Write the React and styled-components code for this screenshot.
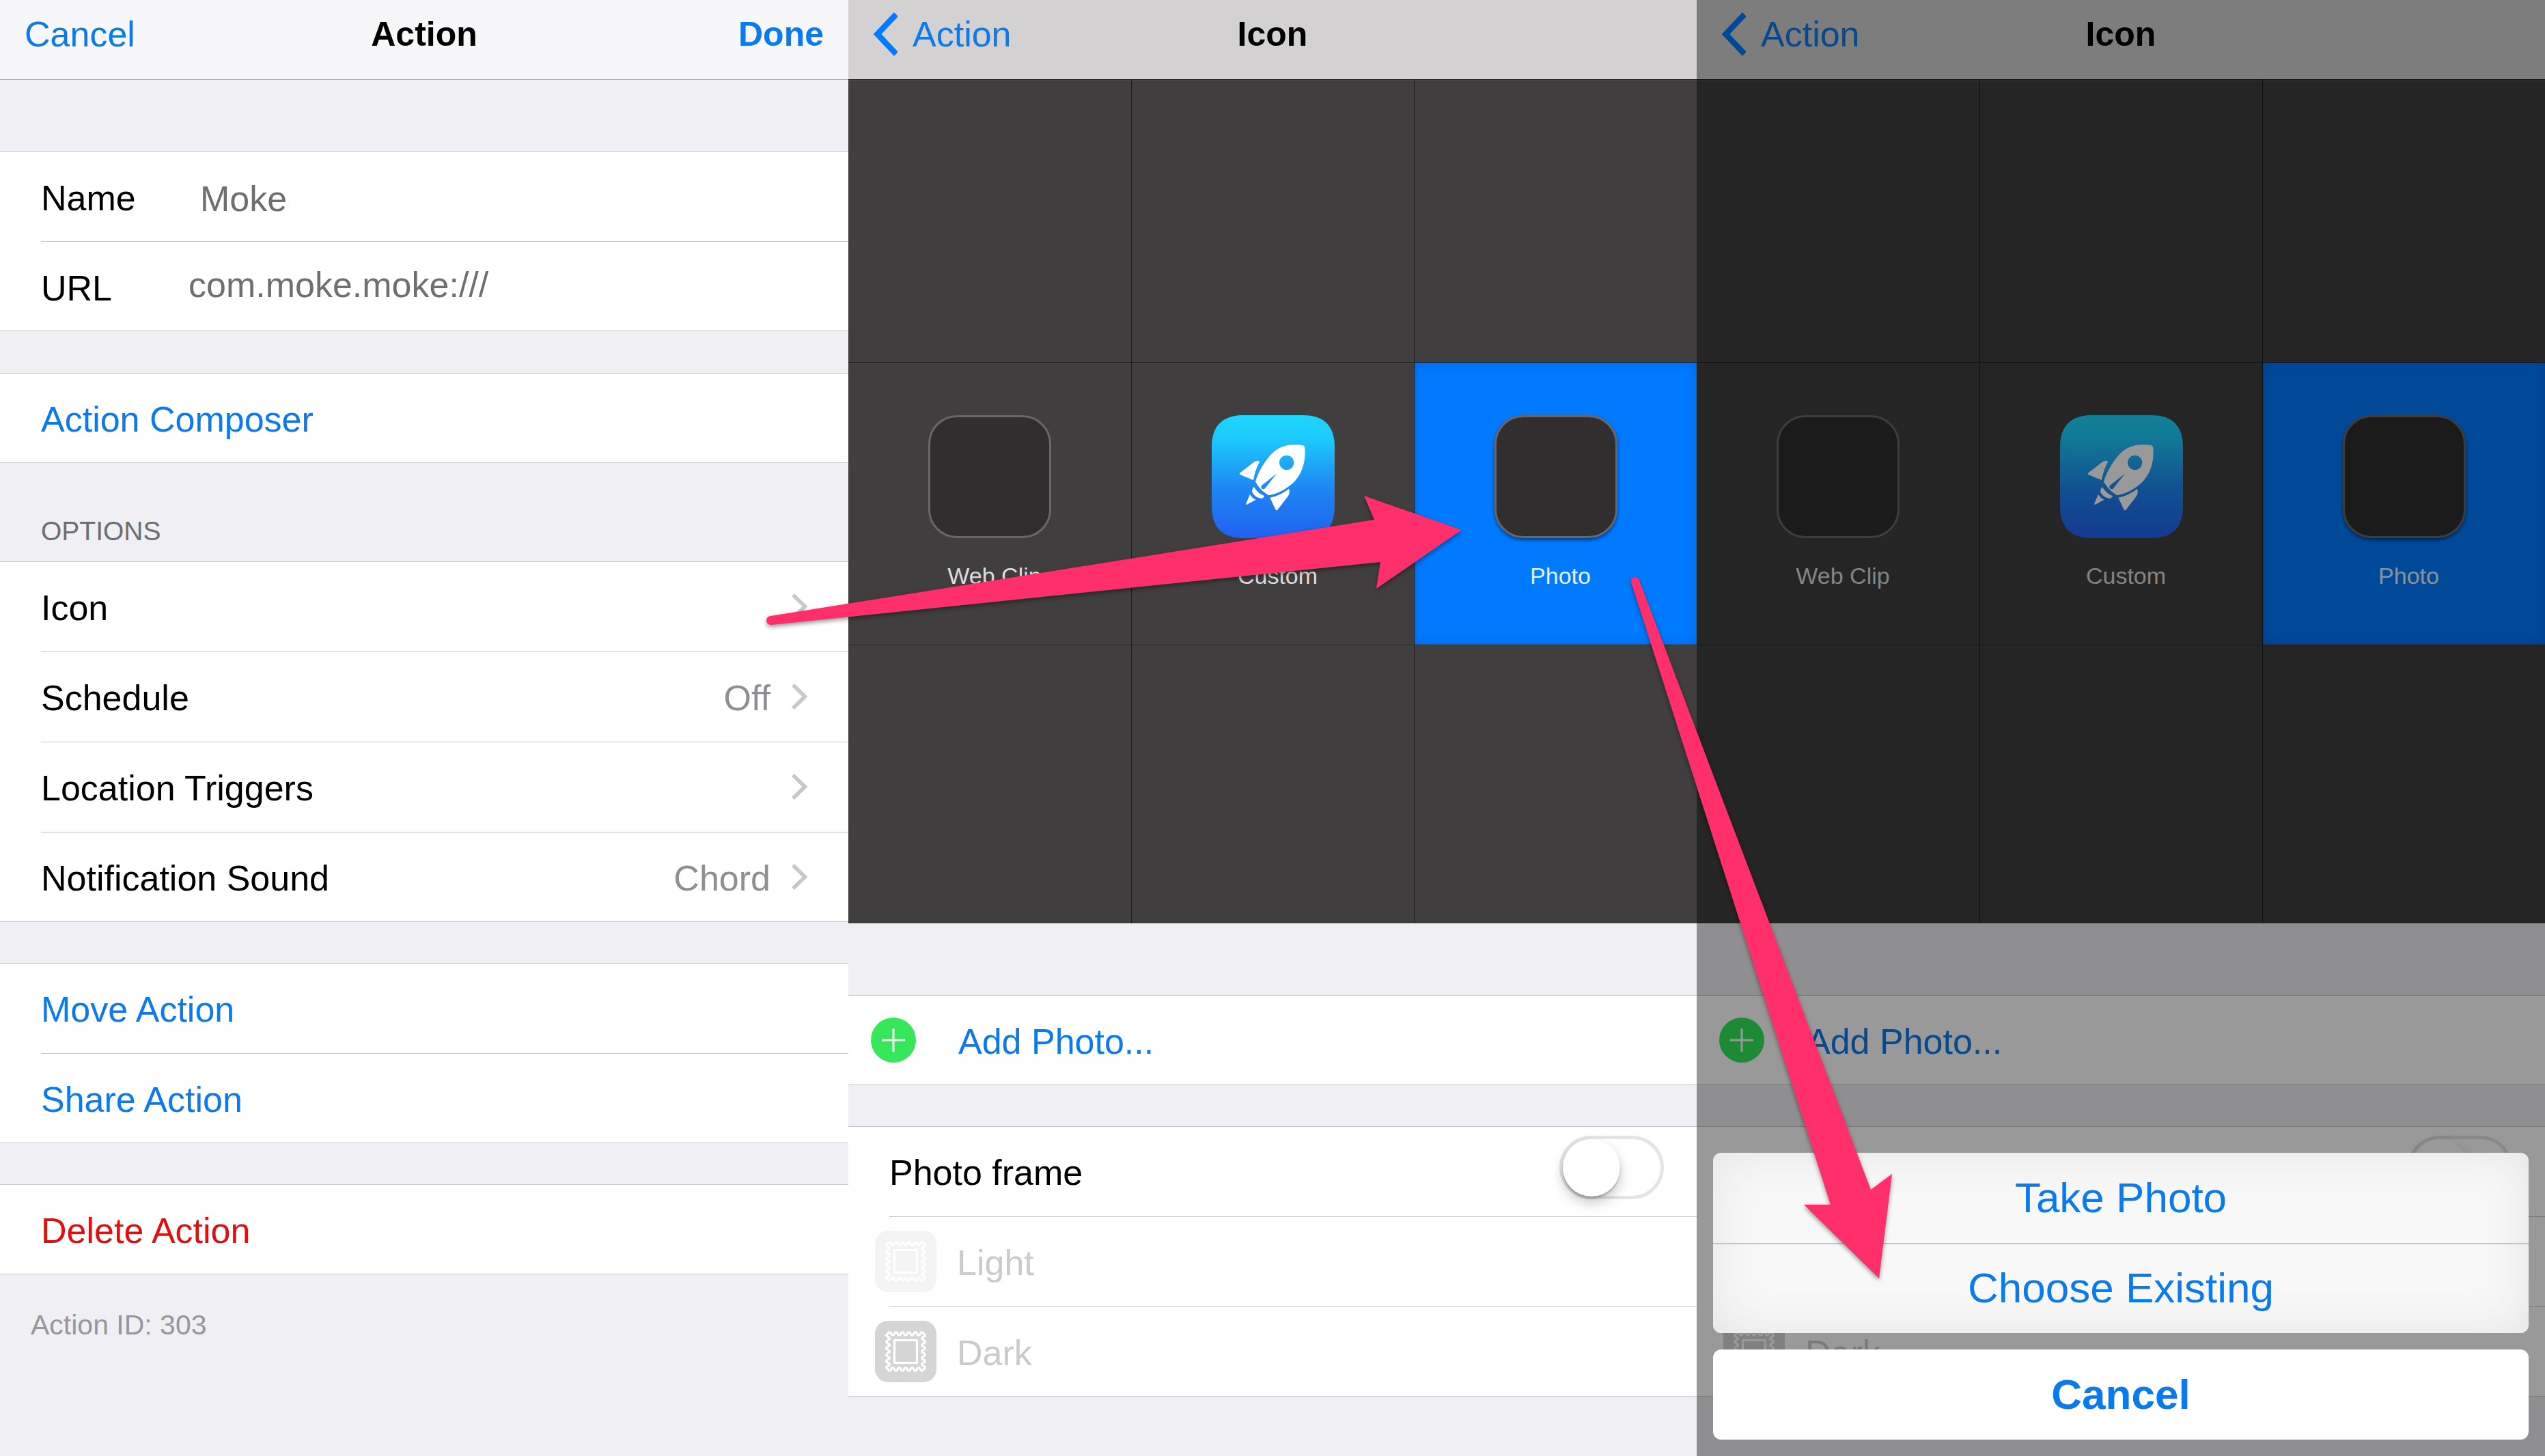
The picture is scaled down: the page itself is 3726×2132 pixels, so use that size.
import React from "react";
import styled, { createGlobalStyle, css } from "styled-components";

const GlobalStyle = createGlobalStyle`
  *, *::before, *::after { box-sizing: border-box; }
  body { margin: 0; background: #efeff4; }
  button, input { font: inherit; color: inherit; margin: 0; }
`;

const BLUE = "#0a7aec";
const LINE = "#c8c7cc";

const Page = styled.main`
  position: relative;
  display: grid;
  grid-template-columns: repeat(3, minmax(0, 1fr));
  min-height: 100vh;
  overflow: hidden;
  font-family: "Liberation Sans", Arial, Helvetica, sans-serif;
  font-size: 52px;
  line-height: 60px;
  color: #000;
`;

const Phone = styled.section`
  position: relative;
  background: #efeff4;
`;

const NavBar = styled.header`
  display: grid;
  grid-template-columns: 1fr auto 1fr;
  align-items: center;
  height: 116px;
  padding: 0 36px 16px;
  background: ${(p) => (p.$gray ? "#d3d1d2" : "#f7f7f9")};
  box-shadow: ${(p) => (p.$gray ? "none" : "0 1px 0 #a9a9ac")};
`;

const NavButton = styled.button`
  display: flex;
  align-items: center;
  gap: 22px;
  justify-self: ${(p) => (p.$end ? "end" : "start")};
  padding: 0;
  border: 0;
  background: none;
  color: ${BLUE};
  font-size: ${(p) => (p.$strong ? 50 : 52)}px;
  font-weight: ${(p) => (p.$strong ? 700 : 400)};
`;

const NavTitle = styled.h1`
  margin: 0;
  font-size: 50px;
  font-weight: 700;
`;

const Group = styled.div`
  margin-top: ${(p) => p.$gap || 61}px;
  background: #fff;
  box-shadow: inset 0 1px 0 ${LINE}, inset 0 -1px 0 ${LINE};
`;

const rowStyle = css`
  display: flex;
  align-items: center;
  width: 100%;
  height: 132px;
  padding: 0 60px;
  border: 0;
  background: transparent;
  text-align: left;
  color: ${(p) => p.$color || "#000"};

  & + & {
    background: linear-gradient(${LINE}, ${LINE}) no-repeat 60px 0 / 100% 1px;
  }
`;

const Row = styled.div`
  ${rowStyle}
`;

const RowButton = styled.button`
  ${rowStyle}
  padding-left: ${(p) => p.$left || 60}px;
`;

const RowText = styled.span`
  flex: 1;
  padding-top: 4px;
`;

const FieldLabel = styled.label`
  width: ${(p) => p.$width}px;
  padding-top: 6px;
`;

const Field = styled.input`
  flex: 1;
  min-width: 0;
  padding: ${(p) => (p.$raised ? "0 0 4px" : "8px 0 0")};
  border: 0;
  outline: 0;
  background: none;
  color: #6f6f73;
`;

const RowValue = styled.span`
  padding: 4px 30px 0 0;
  color: #8e8e93;
`;

const SectionTitle = styled.h2`
  margin: 78px 60px -122px;
  font-size: 39px;
  line-height: 44px;
  font-weight: 400;
  color: #6d6d72;
`;

const Footnote = styled.p`
  margin: 52px 45px;
  font-size: 41px;
  line-height: 44px;
  color: #97979b;
`;

const IconGrid = styled.div`
  display: grid;
  grid-template-columns: repeat(3, 1fr);
  grid-template-rows: 414px 414px 408px;
  background: #403e3f;
`;

const cellStyle = css`
  border: 0 solid #1b191a;
  border-top-width: 1px;
  box-shadow: inset 0 1px 0 #4b494a;

  &:not(:nth-child(3n + 1)) {
    border-left-width: 1px;
  }
`;

const EmptyCell = styled.div`
  ${cellStyle}
`;

const IconCell = styled.button`
  ${cellStyle}
  display: flex;
  flex-direction: column;
  align-items: center;
  gap: 33px;
  padding: 77px 0 0;
  background: transparent;
  color: #dddcdc;
  font-size: 34px;
  line-height: 44px;

  ${(p) =>
    p.$selected &&
    css`
      background: #007aff;
      color: #e6f2ff;
      box-shadow: inset 0 0 16px #0066dd;
    `}
`;

const CellLabel = styled.span`
  padding-left: 14px;
`;

const BlankIcon = styled.span`
  width: 180px;
  height: 180px;
  border: 3px solid #686667;
  border-radius: 42px;
  background: #302e2f;
  box-shadow: ${(p) => (p.$raised ? "0 3px 5px rgba(0, 20, 60, 0.6)" : "none")};
`;

const Toggle = styled.input`
  appearance: none;
  width: 153px;
  height: 93px;
  margin: 0 -12px 11px 0;
  padding: 0;
  border: 5px solid #e5e5e5;
  border-radius: 47px;

  &::before {
    content: "";
    display: block;
    width: 84px;
    height: 84px;
    border-radius: 50%;
    background: #fff;
    box-shadow: 0 9px 18px rgba(0, 0, 0, 0.22), 0 3px 3px rgba(0, 0, 0, 0.2);
  }

  &:checked::before {
    margin-left: 59px;
  }
`;

const IconSlot = styled.span`
  display: flex;
  width: ${(p) => p.$width}px;
`;

const Dimmer = styled.div`
  position: absolute;
  inset: 0;
  display: flex;
  flex-direction: column;
  justify-content: flex-end;
  gap: 24px;
  padding: 24px;
  background: rgba(0, 0, 0, 0.4);
`;

const Sheet = styled.div`
  display: flex;
  flex-direction: column;
  overflow: hidden;
  border-radius: 12px;
  background: ${(p) => (p.$solid ? "#fff" : "#f8f8f8")};
  box-shadow: ${(p) => (p.$solid ? "none" : "inset 0 0 70px #e4e4e5")};
`;

const SheetButton = styled.button`
  height: 132px;
  border: 0;
  background: none;
  color: ${BLUE};
  font-size: 62px;
  line-height: 72px;
  font-weight: ${(p) => (p.$strong ? 700 : 400)};

  & + & {
    box-shadow: inset 0 2px 0 #c2c3c4;
  }
`;

const ArrowLayer = styled.svg`
  position: absolute;
  inset: 0;
  width: 100%;
  height: 100%;
  pointer-events: none;
  filter: drop-shadow(0 3px 3px rgba(0, 0, 0, 0.4));
`;

const Disclosure = () => (
  <svg width="24" height="38" viewBox="0 0 24 38" fill="none" aria-hidden="true">
    <path d="M3 2 L20.500 19 L3 36" stroke="#c7c7cc" strokeWidth="5.500" />
  </svg>
);

const BackChevron = () => (
  <svg width="36" height="64" viewBox="0 0 36 64" fill="none" aria-hidden="true">
    <path d="M34 3 L6.500 32 L34 61" stroke="#007aff" strokeWidth="8.500" />
  </svg>
);

const PlusIcon = () => (
  <svg width="66" height="66" viewBox="0 0 66 66" aria-hidden="true">
    <circle cx="33" cy="33" r="33" fill="#35e759" />
    <path d="M33 16 V50 M16 33 H50" stroke="#fff" strokeWidth="3" />
  </svg>
);

function RocketIcon({ id }) {
  return (
    <svg width="180" height="180" viewBox="0 0 540 540" aria-hidden="true">
      <defs>
        <linearGradient id={id} x1="0" y1="0" x2="0" y2="1">
          <stop offset="0" stopColor="#1fd6fe" />
          <stop offset="0.2" stopColor="#1dc8fc" />
          <stop offset="0.6" stopColor="#1d86f3" />
          <stop offset="1" stopColor="#2261f1" />
        </linearGradient>
      </defs>
      <path
        d="M140 0 H400 C496 0 540 50 540 140 V400 C540 496 490 540 400 540 H140 C44 540 0 490 0 400 V140 C0 44 50 0 140 0 Z"
        fill={`url(#${id})`}
      />
      <g transform="translate(-99 -86)" fill="#fff">
        <path
          fillRule="evenodd"
          d="M499 218 C455 210 410 217 377 242 C337 275 303 335 291 378 C304 403 325 425 350 438 C395 430 440 403 468 371 C500 334 513 278 508 230 Q507 220 499 218 Z M428 262 a32 32 0 1 1 0 64 a32 32 0 1 1 0 -64 Z M385 342 L317 396 Q314 404 320 409 Q328 414 334 406 Z"
        />
        <path d="M310 289 Q296 283 286 291 L224 339 Q218 345 225 348 L282 371 Q290 325 310 289 Z" />
        <path d="M438 409 Q402 438 355 448 L379 500 Q384 508 389 501 L434 442 Q444 428 438 409 Z" />
        <path d="M284 400 Q301 429 331 441 L326 447 Q322 453 314 451 Q287 446 277 424 Q274 417 278 411 Z" />
        <path d="M267 433 Q276 450 293 457 L254 478 Q248 481 250 474 Z" />
      </g>
    </svg>
  );
}

// Perforated edge of the stamp: outward and inward half-waves along each side.
const stampEdge = (() => {
  const halves = 11;
  const step = 52 / halves;
  const sides = [[1, 0], [0, 1], [-1, 0], [0, -1]];
  let d = "M19 19";
  for (const [dx, dy] of sides) {
    for (let i = 0; i < halves; i += 1) {
      const bulge = i % 2 === 0 ? 5 : -5;
      const cx = (dx * step) / 2 + dy * bulge;
      const cy = (dy * step) / 2 - dx * bulge;
      d += ` q${cx} ${cy} ${dx * step} ${dy * step}`;
    }
  }
  return `${d} Z`;
})();

const StampIcon = ({ fill }) => (
  <svg width="90" height="90" viewBox="0 0 90 90" aria-hidden="true">
    <rect width="90" height="90" rx="19" fill={fill} />
    <g fill="none" stroke="#fff" strokeWidth="3.200" strokeLinejoin="round">
      <path d={stampEdge} />
      <rect x="28.500" y="28.500" width="33" height="33" />
    </g>
  </svg>
);

const options = [
  { name: "Icon" },
  { name: "Schedule", value: "Off" },
  { name: "Location Triggers" },
  { name: "Notification Sound", value: "Chord" },
];

function ActionScreen() {
  return (
    <Phone>
      <NavBar>
        <NavButton type="button">Cancel</NavButton>
        <NavTitle>Action</NavTitle>
        <NavButton type="button" $end $strong>Done</NavButton>
      </NavBar>
      <Group $gap={105}>
        <Row>
          <FieldLabel htmlFor="action-name" $width={233}>Name</FieldLabel>
          <Field id="action-name" type="text" defaultValue="Moke" />
        </Row>
        <Row>
          <FieldLabel htmlFor="action-url" $width={216}>URL</FieldLabel>
          <Field id="action-url" type="text" defaultValue="com.moke.moke:///" $raised />
        </Row>
      </Group>
      <Group>
        <RowButton type="button" $color={BLUE}><RowText>Action Composer</RowText></RowButton>
      </Group>
      <SectionTitle>OPTIONS</SectionTitle>
      <Group $gap={144}>
        {options.map((o) => (
          <RowButton type="button" key={o.name}>
            <RowText>{o.name}</RowText>
            {o.value && <RowValue>{o.value}</RowValue>}
            <Disclosure />
          </RowButton>
        ))}
      </Group>
      <Group $gap={60}>
        <RowButton type="button" $color={BLUE}><RowText>Move Action</RowText></RowButton>
        <RowButton type="button" $color={BLUE}><RowText>Share Action</RowText></RowButton>
      </Group>
      <Group $gap={60}>
        <RowButton type="button" $color="#e01010"><RowText>Delete Action</RowText></RowButton>
      </Group>
      <Footnote>Action ID: 303</Footnote>
    </Phone>
  );
}

function IconScreen({ id, children }) {
  return (
    <Phone>
      <NavBar $gray>
        <NavButton type="button"><BackChevron />Action</NavButton>
        <NavTitle>Icon</NavTitle>
      </NavBar>
      <IconGrid>
        <EmptyCell /><EmptyCell /><EmptyCell />
        <IconCell type="button"><BlankIcon /><CellLabel>Web Clip</CellLabel></IconCell>
        <IconCell type="button"><RocketIcon id={`${id}-sky`} /><CellLabel>Custom</CellLabel></IconCell>
        <IconCell type="button" $selected><BlankIcon $raised /><CellLabel>Photo</CellLabel></IconCell>
        <EmptyCell /><EmptyCell /><EmptyCell />
      </IconGrid>
      <Group $gap={105}>
        <RowButton type="button" $left={33} $color={BLUE}>
          <IconSlot $width={128}><PlusIcon /></IconSlot>
          <RowText>Add Photo...</RowText>
        </RowButton>
      </Group>
      <Group $gap={60}>
        <Row>
          <RowText as="label" htmlFor={`${id}-frame`}>Photo frame</RowText>
          <Toggle id={`${id}-frame`} type="checkbox" role="switch" />
        </Row>
        <FrameRow fill="#f4f4f4">Light</FrameRow>
        <FrameRow fill="#d5d5d5">Dark</FrameRow>
      </Group>
      {children}
    </Phone>
  );
}

const FrameButton = styled(RowButton)`
  background: linear-gradient(${LINE}, ${LINE}) no-repeat 60px 0 / 100% 1px;
`;

const FrameRow = ({ fill, children }) => (
  <FrameButton type="button" disabled $left={39} $color="#cbcbcb">
    <IconSlot $width={120}><StampIcon fill={fill} /></IconSlot>
    <RowText>{children}</RowText>
  </FrameButton>
);

export default function App() {
  return (
    <>
      <GlobalStyle />
      <Page>
        <ActionScreen />
        <IconScreen id="picker" />
        <IconScreen id="sheet">
          <Dimmer>
            <Sheet>
              <SheetButton type="button">Take Photo</SheetButton>
              <SheetButton type="button">Choose Existing</SheetButton>
            </Sheet>
            <Sheet $solid>
              <SheetButton type="button" $strong>Cancel</SheetButton>
            </Sheet>
          </Dimmer>
        </IconScreen>
        <ArrowLayer viewBox="0 0 3726 2132" preserveAspectRatio="none" fill="#ff2f6b" aria-hidden="true">
          <path d="M1128 902 L2012 761 L1997 726 L2140 776 L2015 862 L2021 823 L1130 915 Q1123 915 1122 909 Q1122 903 1128 902 Z" />
          <path d="M2388 852 Q2388 846 2393 845 Q2398 845 2400 850 L2739 1742 L2770 1719 L2751 1872 L2641 1764 L2680 1764 Z" />
        </ArrowLayer>
      </Page>
    </>
  );
}
